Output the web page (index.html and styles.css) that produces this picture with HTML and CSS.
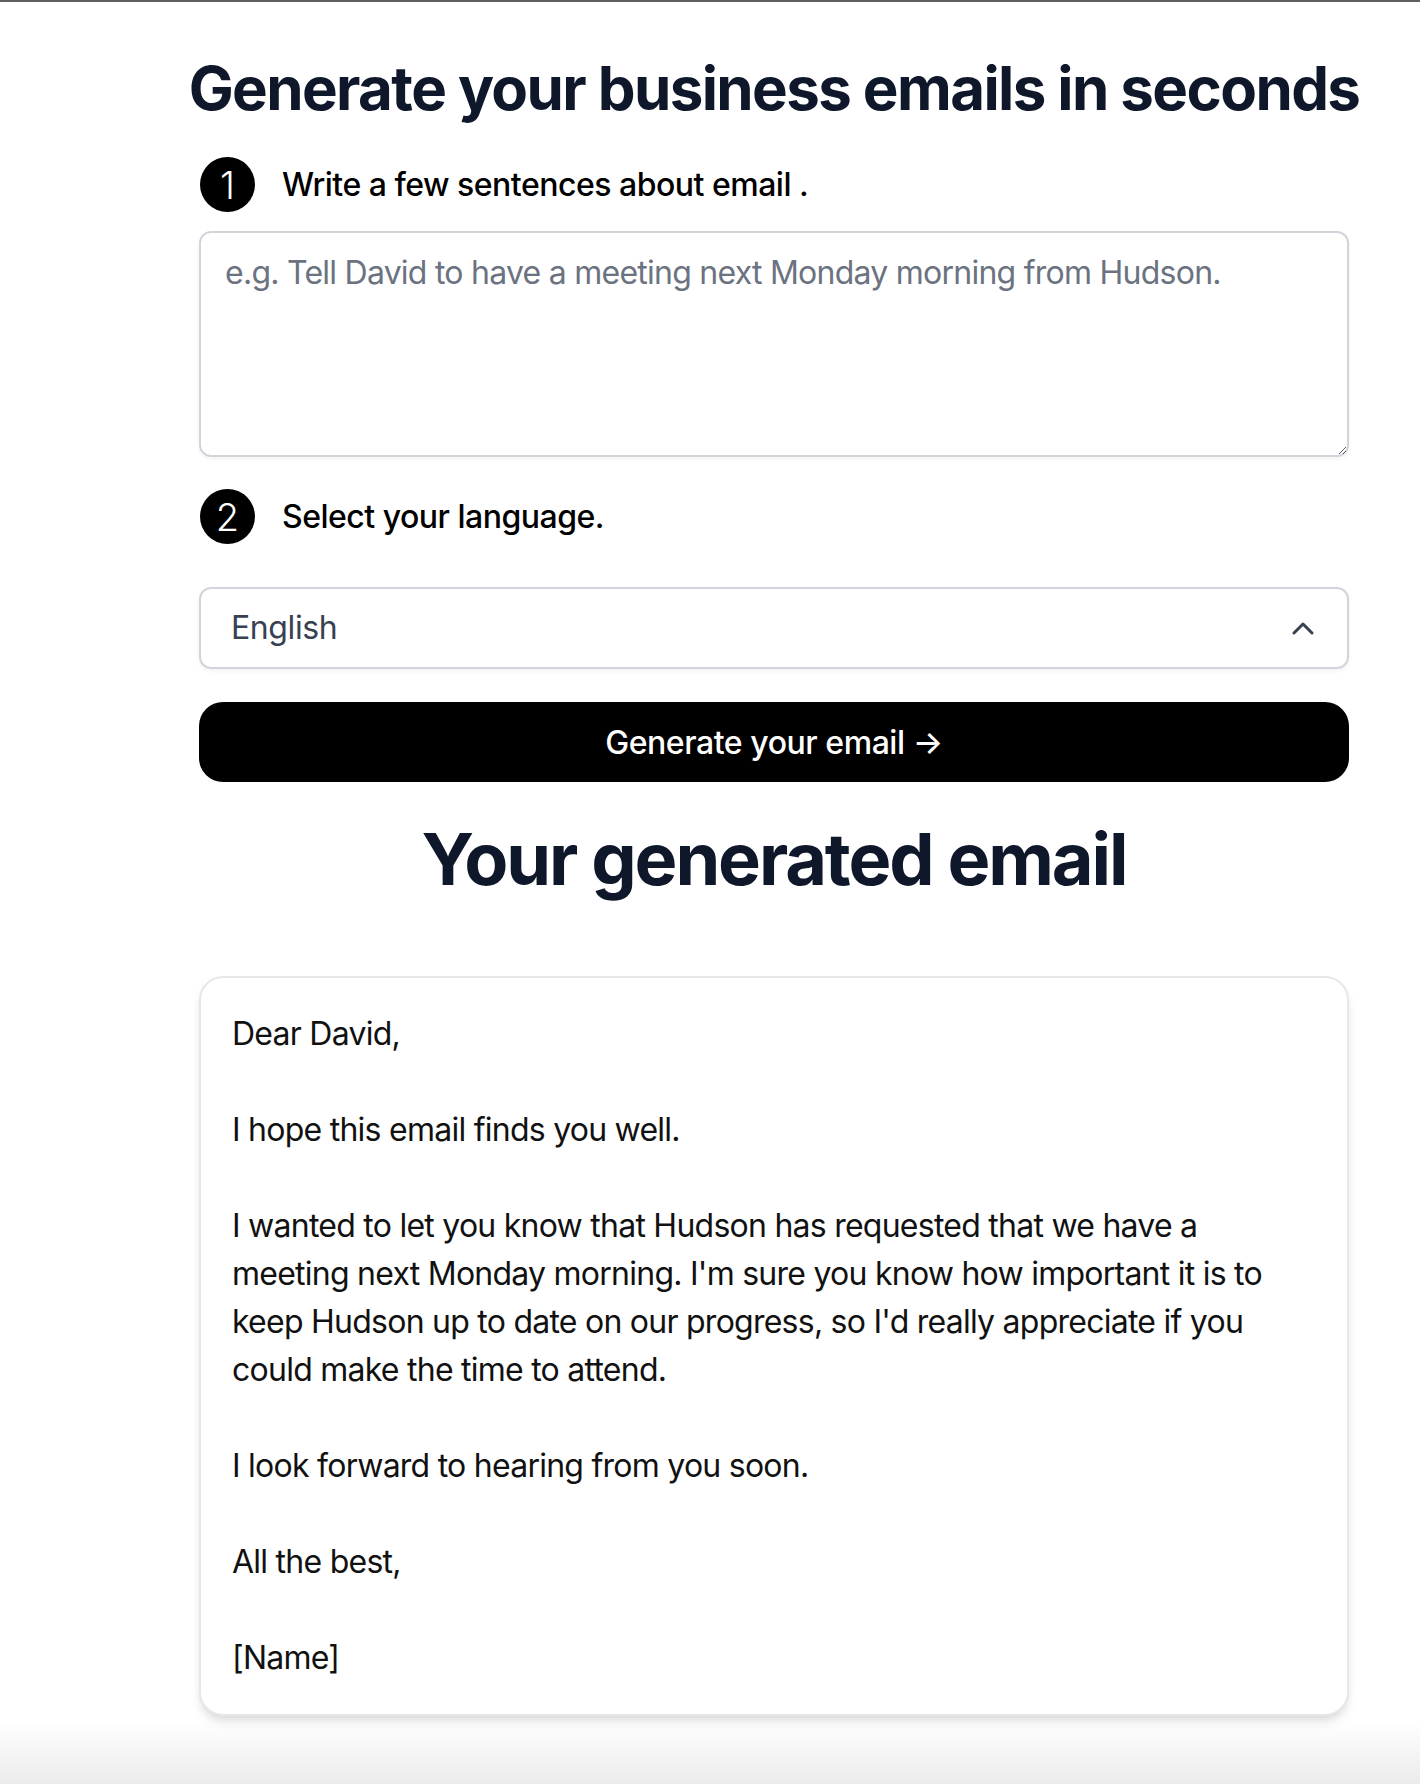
FILE: index.html
```html
<!DOCTYPE html>
<html lang="en">
<head>
<meta charset="utf-8">
<title>Generate your business emails</title>
<link rel="stylesheet" href="styles.css">
</head>
<body>
<div class="topbar"></div>
<main class="page">
  <h1 class="title">Generate your business emails in seconds</h1>
  <section class="form">
    <div class="step">
      <span class="step-num">1</span>
      <p class="step-text">Write a few sentences about email .</p>
    </div>
    <textarea class="prompt" placeholder="e.g. Tell David to have a meeting next Monday morning from Hudson."></textarea>
    <div class="step step-two">
      <span class="step-num">2</span>
      <p class="step-text">Select your language.</p>
    </div>
    <div class="select">
      <span class="select-value">English</span>
      <svg class="chevron" width="22" height="14" viewBox="0 0 22 14" aria-hidden="true"><path d="M2 12 L11 3 L20 12" fill="none" stroke="#374151" stroke-width="3" stroke-linecap="round" stroke-linejoin="round"/></svg>
    </div>
    <button class="generate" type="button">Generate your email &rarr;</button>
  </section>
  <h2 class="result-title">Your generated email</h2>
  <div class="result-card">
    <p class="email">Dear David,

I hope this email finds you well.

I wanted to let you know that Hudson has requested that we have a meeting next Monday morning. I'm sure you know how important it is to keep Hudson up to date on our progress, so I'd really appreciate if you could make the time to attend.

I look forward to hearing from you soon.

All the best,

[Name]</p>
  </div>
</main>
</body>
</html>
```

FILE: styles.css
```css
* { box-sizing: border-box; }
html, body { margin: 0; padding: 0; }
body {
  min-height: 1784px;
  font-family: "Inter", "Noto Sans", "Liberation Sans", sans-serif;
  background: linear-gradient(to bottom, #ffffff 0, #ffffff 1722px, #ebebeb 1784px);
  color: #000;
}
.topbar {
  height: 2px;
  background: #5f5f5f;
}
.page {
  width: 1150px;
  margin-left: 199px;
  display: flex;
  flex-direction: column;
  align-items: center;
}
.title {
  margin: 50px 0 0;
  font-size: 60px;
  line-height: 72px;
  font-weight: 700;
  color: #0f172a;
  white-space: nowrap;
  letter-spacing: -1.6px;
}
.form {
  width: 100%;
  display: flex;
  flex-direction: column;
}
.step {
  margin-top: 33px;
  display: flex;
  align-items: center;
  gap: 27px;
  padding-left: 1px;
  height: 55px;
}
.step-two { margin-top: 32px; }
.step-num {
  width: 55px;
  height: 55px;
  border-radius: 50%;
  background: #000;
  color: #fff;
  font-size: 38px;
  font-weight: 300;
  display: flex;
  align-items: center;
  justify-content: center;
  flex-shrink: 0;
}
.step-text {
  margin: 0;
  font-size: 32px;
  line-height: 48px;
  font-weight: 500;
  color: #000;
  letter-spacing: -0.5px;
}
.prompt {
  margin-top: 19px;
  width: 100%;
  height: 226px;
  border: 2px solid #d1d5db;
  border-radius: 12px;
  padding: 16px 24px;
  font-family: inherit;
  font-size: 32px;
  line-height: 48px;
  letter-spacing: -0.75px;
  color: #111827;
  box-shadow: 0 2px 4px rgba(0,0,0,0.05);
  outline: none;
  display: block;
}
.prompt::placeholder { color: #6b7280; }
.select {
  margin-top: 43px;
  height: 82px;
  border: 2px solid #d1d5db;
  border-radius: 12px;
  box-shadow: 0 2px 4px rgba(0,0,0,0.05);
  display: flex;
  align-items: center;
  justify-content: space-between;
  padding: 0 33px 0 30px;
}
.select-value {
  font-size: 32px;
  line-height: 48px;
  color: #374151;
  letter-spacing: -0.4px;
}
.chevron { display: block; }
.generate {
  margin-top: 33px;
  height: 80px;
  width: 100%;
  border: none;
  border-radius: 24px;
  background: #000;
  color: #fff;
  font-family: inherit;
  font-size: 32px;
  font-weight: 500;
  letter-spacing: -0.45px;
  cursor: pointer;
}
.result-title {
  margin: 37px 0 0;
  font-size: 72px;
  line-height: 80px;
  font-weight: 700;
  color: #0f172a;
  letter-spacing: -2.1px;
}
.result-card {
  margin-top: 77px;
  width: 100%;
  background: #fff;
  border: 2px solid #e5e7eb;
  border-radius: 24px;
  padding: 32px 32px 32px 31px;
  box-shadow: 0 8px 12px -2px rgba(0,0,0,0.1), 0 4px 8px -4px rgba(0,0,0,0.1);
}
.email {
  margin: 0;
  white-space: pre-wrap;
  font-size: 32px;
  line-height: 48px;
  letter-spacing: -0.75px;
  color: #111;
}
```
